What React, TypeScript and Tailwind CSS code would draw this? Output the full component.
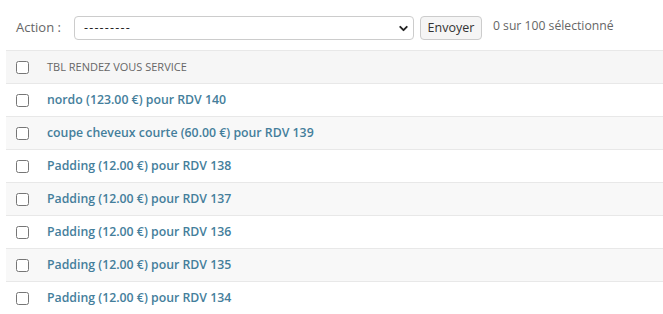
import { ChevronDown } from 'lucide-react';

const ROWS = [
  { name: 'nordo', price: '123.00', rdv: 140 },
  { name: 'coupe cheveux courte', price: '60.00', rdv: 139 },
  { name: 'Padding', price: '12.00', rdv: 138 },
  { name: 'Padding', price: '12.00', rdv: 137 },
  { name: 'Padding', price: '12.00', rdv: 136 },
  { name: 'Padding', price: '12.00', rdv: 135 },
  { name: 'Padding', price: '12.00', rdv: 134 },
];

function Box() {
  return <input type="checkbox" className="m-0 h-[13px] w-[13px] shrink-0" />;
}

export default function App() {
  return (
    <div className="h-[314px] w-[663px] overflow-hidden bg-white font-['Open_Sans',sans-serif] text-[12.5px]">
      {/* actions bar */}
      <div className="box-content flex h-[24px] items-center pl-[16px] pt-[16px]">
        <label className="text-[13px] text-[#666]">Action :</label>
        <div className="relative ml-[13px]">
          <select className="h-[24px] w-[340px] appearance-none rounded-[4px] border border-[#ccc] bg-white pl-[9px] tracking-[1.2px] text-[#222]">
            <option>---------</option>
          </select>
          <ChevronDown size={13} strokeWidth={3.5} className="pointer-events-none absolute right-[4px] top-[6px] text-[#222]" />
        </div>
        <button
          type="button"
          className="ml-[6px] h-[24px] w-[62px] rounded-[4px] border border-[#ccc] bg-[#f5f5f5] text-[#333]"
        >
          Envoyer
        </button>
        <span className="-mt-[3px] ml-[11px] text-[12.2px] text-[#666]">0 sur 100 sélectionné</span>
      </div>

      {/* result list */}
      <div className="ml-[6px] mt-[10px]">
        <div className="flex h-[34px] items-center gap-[18px] border-y border-[#e8e8e8] bg-[#f6f6f6] pl-[10px]">
          <Box />
          <span className="text-[11px] uppercase text-[#666]">Tbl rendez vous service</span>
        </div>
        {ROWS.map((r, i) => (
          <div
            key={r.rdv}
            className={
              'flex h-[33px] items-center gap-[18px] border-b border-[#e8e8e8] pl-[10px] ' +
              (i % 2 === 1 ? 'bg-[#f8f8f8]' : 'bg-white')
            }
          >
            <Box />
            <a className="pt-[1px] text-[12.3px] font-semibold text-[#447e9b]">
              {r.name} ({r.price} €) pour RDV {r.rdv}
            </a>
          </div>
        ))}
      </div>
    </div>
  );
}
